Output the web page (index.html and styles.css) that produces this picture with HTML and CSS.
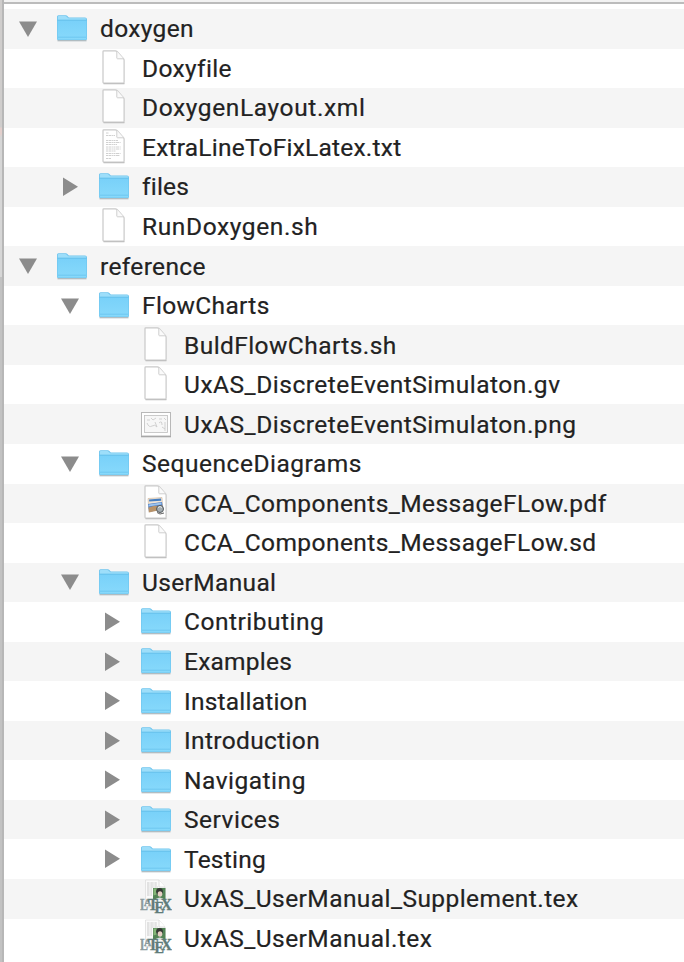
FILE: index.html
```html
<!DOCTYPE html>
<html lang="en">
<head>
<meta charset="utf-8">
<title>Files</title>
<link rel="stylesheet" href="styles.css">
</head>
<body>
<svg class="defs" aria-hidden="true">
  <defs>
    <linearGradient id="blue" x1="0" y1="0" x2="0" y2="1"><stop offset="0" stop-color="#79d1f9"/><stop offset="1" stop-color="#87d9fb"/></linearGradient>
    <symbol id="folder" viewBox="0 0 32 36">
      <path d="M1.500 31.700h29" stroke="#a9b6bc" stroke-width="1.2"/>
      <path d="M1 30V7.700Q1 6.200 2.500 6.200h7.300q1 0 1.600.8l1.400 1.500H29q2 0 2 2V30q0 1-1 1H2q-1 0-1-1z" fill="#6fc5ee"/>
      <path d="M1.800 10.700V8q0-1 1-1h6.600q.8 0 1.300.7l1.600 1.600H29q1.200 0 1.200 1.400z" fill="#9ddefa"/>
      <path d="M1.600 11.700h28.800v17.900q0 .9-.9.9h-27q-.9 0-.9-.9z" fill="url(#blue)"/>
      <path d="M1.200 11.300h29.600M2 28.200h28" stroke="#68c4ee" stroke-width=".8"/>
    </symbol>
    <symbol id="page" viewBox="0 0 32 36">
      <path d="M5.500 34.600h21" stroke="#b9b9b9" stroke-width="1.300"/>
      <path d="M5.800 1.800h11.500q1 0 1.700.7l6.300 6.800q.8.800.8 1.900v22q0 .8-.8.8H5.800q-.8 0-.8-.8V2.600q0-.8.8-.8z" fill="#fff" stroke="#c9c9c9" stroke-width="1.200"/>
      <path d="M18.800 2.300v6.700q0 .8.800.8h6" fill="#fafafa" stroke="#cfcfcf" stroke-width="1"/>
    </symbol>
    <symbol id="text" viewBox="0 0 32 36">
      <use href="#page"/>
      <path d="M8 5h3M8 7.500h9M8 12.500h12M8 14.500h15M8 16.500h11M8 19h15M8 21h15M8 23h10M8 25.500h15M8 27.500h14M8 30.500h5" stroke="#d0d0d0" stroke-width="1" stroke-dasharray="2 .5 3 .6 1 .4"/>
    </symbol>
    <symbol id="image" viewBox="0 0 32 36">
      <path d="M1 31.500h30" stroke="#999" stroke-width="1.500"/>
      <rect x="1.500" y="7.500" width="29" height="23.500" fill="#fff" stroke="#b8b8b8"/>
      <rect x="4.500" y="10.500" width="23" height="17" fill="#f7f7f7" stroke="#bdbdbd" stroke-width=".8"/>
      <path d="M7 15h3M11 13l2 2 3-2M19 14h3M24 13l2 2M7 18q2 5 5 3t5 1M15 17l2 5M19 18q3-3 3 2M25 17v9M22 22l3 2" fill="none" stroke="#ccc" stroke-width=".9"/>
    </symbol>
    <symbol id="pdf" viewBox="0 0 32 36">
      <use href="#page"/>
      <path d="M8 14.500l14-1 .7 10-14 1z" fill="#f1e6d8" stroke="#c4a88a" stroke-width=".5"/>
      <path d="M9 15.500l12-1 .2 2.300-12 .8z" fill="#467fc2"/>
      <path d="M8 20l14-2 1 7-14 3z" fill="#4a7ac4"/>
      <path d="M8.500 23.500l5-1.500 9-.5.300 4-14 3z" fill="#b8936a"/>
      <path d="M8.500 20.500l13-2v2l-13 2z" fill="#9cc5f0"/>
      <circle cx="20" cy="25" r="3.500" fill="#a4adb2" stroke="#555a5e"/>
      <path d="M18 23.500q2-2 4 0" stroke="#e5ecef" fill="none"/>
      <path d="M17 28.500l3 1.500 4-1" stroke="#666" fill="none"/>
    </symbol>
    <symbol id="tex" viewBox="0 0 32 36">
      <path d="M5.500 1h13.500l6 7v20H5.500z" fill="#fafafa" stroke="#dedede" stroke-width=".8"/>
      <path d="M7 4h10M7 6h10M7 8h11M7 10h5M7 12h5M7 14h5M7 16h5" stroke="#c5c5c5" stroke-width=".9" stroke-dasharray="2 .5 1 .4"/>
      <path d="M19 1v7h6" fill="#fff" stroke="#d5d5d5" stroke-width=".8"/>
      <path d="M13 9h12.500v12H13z" fill="#528455"/>
      <path d="M13.500 9.500h5l-2 6-3 1z" fill="#83b578"/>
      <circle cx="19.500" cy="12.500" r="3.400" fill="#343934"/>
      <ellipse cx="20" cy="15" rx="2.300" ry="2.800" fill="#e7cfc5"/>
      <path d="M14 21q6-5 11 0z" fill="#d8dedc"/>
      <g class="logo"><text class="pale" x="0" y="30.500" textLength="8" lengthAdjust="spacingAndGlyphs">L</text><text class="small pale" x="4" y="27">A</text><text x="8" y="30.500" textLength="10" lengthAdjust="spacingAndGlyphs">T</text><text x="14.500" y="33.500" textLength="9.500" lengthAdjust="spacingAndGlyphs">E</text><text x="21" y="30.500" textLength="11" lengthAdjust="spacingAndGlyphs">X</text></g>
    </symbol>
    <symbol id="open" viewBox="0 0 20 20"><path d="M1 2.500h18L10 18z" fill="#8c8c8c"/></symbol>
    <symbol id="closed" viewBox="0 0 20 20"><path d="M3 .5V19L18 9.700z" fill="#8c8c8c"/></symbol>
  </defs>
</svg>
<div class="window">
  <aside class="edge"></aside>
  <main class="list">
    <header class="bar"></header>
    <ul class="tree">
      <li class="row l0"><svg class="arrow"><use href="#open"/></svg><svg class="icon"><use href="#folder"/></svg><span>doxygen</span></li>
      <li class="row l1"><i class="arrow"></i><svg class="icon"><use href="#page"/></svg><span>Doxyfile</span></li>
      <li class="row l1"><i class="arrow"></i><svg class="icon"><use href="#page"/></svg><span class="wider">DoxygenLayout.xml</span></li>
      <li class="row l1"><i class="arrow"></i><svg class="icon"><use href="#text"/></svg><span class="tight">ExtraLineToFixLatex.txt</span></li>
      <li class="row l1"><svg class="arrow"><use href="#closed"/></svg><svg class="icon"><use href="#folder"/></svg><span class="tight">files</span></li>
      <li class="row l1"><i class="arrow"></i><svg class="icon"><use href="#page"/></svg><span class="wider">RunDoxygen.sh</span></li>
      <li class="row l0"><svg class="arrow"><use href="#open"/></svg><svg class="icon"><use href="#folder"/></svg><span>reference</span></li>
      <li class="row l1"><svg class="arrow"><use href="#open"/></svg><svg class="icon"><use href="#folder"/></svg><span>FlowCharts</span></li>
      <li class="row l2"><i class="arrow"></i><svg class="icon"><use href="#page"/></svg><span class="slight">BuldFlowCharts.sh</span></li>
      <li class="row l2"><i class="arrow"></i><svg class="icon"><use href="#page"/></svg><span class="wide">UxAS_DiscreteEventSimulaton.gv</span></li>
      <li class="row l2"><i class="arrow"></i><svg class="icon"><use href="#image"/></svg><span class="wide">UxAS_DiscreteEventSimulaton.png</span></li>
      <li class="row l1"><svg class="arrow"><use href="#open"/></svg><svg class="icon"><use href="#folder"/></svg><span class="wide">SequenceDiagrams</span></li>
      <li class="row l2"><i class="arrow"></i><svg class="icon"><use href="#pdf"/></svg><span class="slight">CCA_Components_MessageFLow.pdf</span></li>
      <li class="row l2"><i class="arrow"></i><svg class="icon"><use href="#page"/></svg><span class="slight">CCA_Components_MessageFLow.sd</span></li>
      <li class="row l1"><svg class="arrow"><use href="#open"/></svg><svg class="icon"><use href="#folder"/></svg><span>UserManual</span></li>
      <li class="row l2"><svg class="arrow"><use href="#closed"/></svg><svg class="icon"><use href="#folder"/></svg><span class="wide">Contributing</span></li>
      <li class="row l2"><svg class="arrow"><use href="#closed"/></svg><svg class="icon"><use href="#folder"/></svg><span class="tight">Examples</span></li>
      <li class="row l2"><svg class="arrow"><use href="#closed"/></svg><svg class="icon"><use href="#folder"/></svg><span class="tight">Installation</span></li>
      <li class="row l2"><svg class="arrow"><use href="#closed"/></svg><svg class="icon"><use href="#folder"/></svg><span>Introduction</span></li>
      <li class="row l2"><svg class="arrow"><use href="#closed"/></svg><svg class="icon"><use href="#folder"/></svg><span class="wide">Navigating</span></li>
      <li class="row l2"><svg class="arrow"><use href="#closed"/></svg><svg class="icon"><use href="#folder"/></svg><span class="wide">Services</span></li>
      <li class="row l2"><svg class="arrow"><use href="#closed"/></svg><svg class="icon"><use href="#folder"/></svg><span class="tight">Testing</span></li>
      <li class="row l2"><i class="arrow"></i><svg class="icon"><use href="#tex"/></svg><span class="slight">UxAS_UserManual_Supplement.tex</span></li>
      <li class="row l2"><i class="arrow"></i><svg class="icon"><use href="#tex"/></svg><span class="slight">UxAS_UserManual.tex</span></li>
    </ul>
  </main>
</div>
</body>
</html>
```
FILE: styles.css
```css
* { box-sizing: border-box; }
body { margin: 0; background: #fff; overflow: hidden; }
.defs { display: block; width: 0; height: 0; }
.window { display: flex; width: 684px; height: 962px; overflow: hidden; }
.edge {
  flex: none;
  width: 4px;
  background: linear-gradient(#cfcdcc 127px, #e3cfcc 128px, #e3cfcc 134px, #d6d6d6 137px, #d6d6d6 277px, #c2c2c2 277px);
  border-right: 2px solid #b7b7b7;
}
.list { flex: 1; min-width: 0; }
.bar { height: 4px; background: #f3f3f3; border-bottom: 2px solid #bcbcbc; }
.tree { list-style: none; margin: 0; padding: 5px 0 0; }
.row {
  display: flex;
  height: 39.56px;
  align-items: center;
  font: 400 24.5px/39px Roboto, "Liberation Sans", sans-serif;
  letter-spacing: .35px;
  color: #222;
  white-space: nowrap;
}
.row span { -webkit-text-stroke: .2px #222; }
.row:nth-child(odd) { background: #f5f5f5; }
.l0 { padding-left: 14px; }
.l1 { padding-left: 56px; }
.l2 { padding-left: 98px; }
.row .tight { letter-spacing: .22px; }
.row .slight { letter-spacing: .43px; }
.row .wide { letter-spacing: .51px; }
.row .wider { letter-spacing: .62px; }
.arrow { flex: none; width: 20px; height: 20px; margin-right: 18px; }
.icon { flex: none; width: 32px; height: 36px; margin: 0 12px 3px 0; }
.logo {
  font: 700 17px "Liberation Serif", serif;
  letter-spacing: 0;
  fill: #607c79;
  stroke: #607c79;
  stroke-width: .4px;
}
.pale { fill: #8b9b9e; stroke: #8b9b9e; }
.small { font-size: 10px; }
```
